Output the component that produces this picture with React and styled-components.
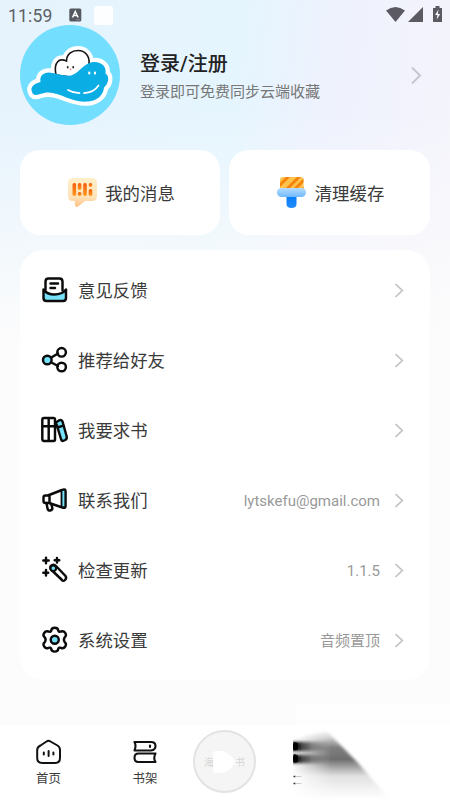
import styled, { createGlobalStyle } from "styled-components";

const GlobalStyle = createGlobalStyle`
    * {
        box-sizing: border-box;
    }
    body {
        margin: 0;
        background-color: #fcfcfc;
        color: #3a3a3a;
        font-family: Roboto, "Noto Sans CJK SC", sans-serif;
    }
    svg {
        display: block;
        flex-shrink: 0;
    }
`;

const Page = styled.div`
    width: 450px;
    height: 800px;
    display: flex;
    flex-direction: column;
    overflow: hidden;
    background:
        linear-gradient(180deg, rgba(252, 252, 252, 0) 110px, #fcfcfc 340px),
        linear-gradient(98deg, #e6f3fd 0%, #e5f5fe 44%, #eef2fd 60%, #f3f3fc 80%, #f8f7fc 100%);
`;

const StatusBar = styled.div`
    height: 25px;
    padding: 6px 8px 0;
    display: flex;
    align-items: flex-start;
    color: #5c6064;
`;

const Clock = styled.span`
    width: 61px;
    font-size: 17.5px;
    line-height: 20px;
    letter-spacing: 0.2px;
`;

const Blank = styled.div`
    width: 19px;
    height: 19px;
    margin-left: 12px;
    border-radius: 2px;
    background-color: #fdfeff;
`;

const StatusIcons = styled.div`
    margin-left: auto;
    margin-right: -1px;
`;

const Profile = styled.div`
    height: 100px;
    padding: 0 28px 0 20px;
    display: flex;
    align-items: center;
`;

const ProfileText = styled.div`
    flex: 1;
    padding: 3px 0 0 20px;
`;

const Title = styled.div`
    color: #222;
    font-size: 20px;
    line-height: 30px;
    font-weight: 500;
`;

const Subtitle = styled.div`
    margin-top: 1px;
    color: #777;
    font-size: 15px;
    line-height: 24px;
`;

const Tiles = styled.div`
    display: grid;
    grid-template-columns: 200px 201px;
    gap: 9px;
    padding: 25px 20px 15px;
`;

const Tile = styled.div`
    height: 85px;
    padding: 0 0 2px 2px;
    border-radius: 20px;
    display: flex;
    align-items: center;
    justify-content: center;
    gap: 8px;
    background-color: white;
`;

const TileLabel = styled.span`
    padding-top: 2px;
    font-size: 17.4px;
`;

const Menu = styled.div`
    height: 430px;
    margin: 0 20px;
    padding: 5px 26px 5px 21px;
    border-radius: 24px;
    background-color: white;
`;

const MenuRow = styled.div`
    height: 70px;
    display: flex;
    align-items: center;
`;

const MenuLabel = styled.span`
    margin-left: 9px;
    padding-bottom: 2px;
    flex: 1;
    font-size: 17.4px;
`;

const MenuValue = styled.span`
    margin-right: 14px;
    padding: ${(props) => (props.$latin ? "2px 0 0" : "0 0 2px")};
    color: #999;
    font-size: 15px;
`;

const TabBar = styled.div`
    height: 75px;
    margin-top: auto;
    display: grid;
    grid-template-columns: 97px 96px 63px 194px;
    background-color: white;
`;

const Tab = styled.div`
    display: flex;
    flex-direction: column;
    align-items: center;
    padding-top: 13px;
`;

const TabLabel = styled.span`
    margin-top: 4px;
    font-size: 12.4px;
    line-height: 18px;
`;

const Player = styled.div`
    width: 63px;
    height: 63px;
    margin-top: 5px;
    border: 2px solid #e3e3e3;
    border-radius: 50%;
    display: flex;
    align-items: center;
    justify-content: center;
    background-color: #f5f5f5;
    color: #d6d6d6;
    font-size: 10px;
    svg {
        margin: 0 -1px 0 -2px;
    }
`;

function Avatar() {
    const cloud =
        "M36 50C35 45 35 41 36.500 38.500C38.500 34.500 42.500 34 46.500 36C46.500 29 52 25.500 58 25.500C65 25.500 70 31 69 39L58 53Z";
    const water =
        "M12 67C10 62 14 58.500 20.500 57C19.500 51 23 47.500 29 47.500C37 48.500 44 51.500 51 50.500C59 48 63 39.500 71 37.500C80 35.500 87 41 85.500 48.500C90 51 88.500 59 84 62.500C83.500 70 77 76 68 76.500C57 77.500 48 73 40 70C32 67 27 66.500 20 69C15 71 13 70 12 67Z";
    return (
        <svg width="100" height="100" viewBox="0 0 100 100">
            <circle cx="50" cy="50" r="50" fill="#73defe" />
            <path d={cloud} fill="white" stroke="white" strokeWidth="9" strokeLinejoin="round" />
            <path d={water} fill="white" stroke="white" strokeWidth="8.500" strokeLinejoin="round" />
            <path d={cloud} fill="white" stroke="#161616" strokeWidth="1.600" />
            <path d={water} fill="#0badE5" />
            <g fill="none" stroke="white" strokeLinecap="round">
                <path d="M48 65Q53 68 59.500 68.200M64 68.200Q74 67.500 78.500 60.500" strokeWidth="1.700" />
                <path d="M69.300 47.500v1M75 47.500v1" strokeWidth="2.200" />
            </g>
            <path d="M47.700 41.800v.8M53.200 41.800v.8" stroke="#222" strokeWidth="1.700" strokeLinecap="round" />
            <circle cx="50.500" cy="44.300" r=".9" fill="#f08a8a" />
        </svg>
    );
}

const Chevron = ({ large }) => (
    <svg width={large ? 12 : 10} height={large ? 19 : 15} viewBox={large ? "0 0 12 19" : "0 0 10 15"} fill="none">
        <path
            d={large ? "M2 1.5L10 9.5L2 17.500" : "M1.500 1L8.300 7.500L1.500 14"}
            stroke={large ? "#c5c7ce" : "#c1c1c1"}
            strokeWidth={large ? 2 : 1.700}
        />
    </svg>
);

const InputModeIcon = styled.svg`
    margin-top: 2px;
`;

function InputMode() {
    return (
        <InputModeIcon width="13" height="14" viewBox="0 0 13 14">
            <rect x=".3" y=".5" width="12" height="13" rx="1.500" fill="#555a60" />
            <path d="M3.500 9.500L6.300 3.500L9.100 9.500M4.600 7.500H8" fill="none" stroke="white" strokeWidth="1.500" />
            <path d="M7 11.700h4" stroke="#a7aaaf" strokeWidth=".6" />
        </InputModeIcon>
    );
}

function SystemIcons() {
    return (
        <svg width="57" height="17" viewBox="0 0 57 17" fill="#5b5a62">
            <path d="M0 4.500Q9.500-2.500 19 4.500L9.500 16Z" />
            <path d="M37 1V16H22Z" />
            <path d="M47 2h2.500V0h4v2H56v14H47Z" />
            <path d="M52.500 3.500L49 9h2.300l-.6 4.500L54.200 8h-2.300Z" fill="#f4f3fb" />
        </svg>
    );
}

function MessageIcon() {
    return (
        <svg width="30" height="30" viewBox="0 0 30 30">
            <defs>
                <linearGradient id="bubble" x1="0" y1="0" x2="0" y2="1">
                    <stop offset="0" stopColor="#ffefc9" />
                    <stop offset=".65" stopColor="#ffe3b9" />
                    <stop offset="1" stopColor="#ffc184" />
                </linearGradient>
                <linearGradient id="bars" x1="0" y1="0" x2="0" y2="1">
                    <stop offset="0" stopColor="#f15a0c" />
                    <stop offset="1" stopColor="#ff9a22" />
                </linearGradient>
            </defs>
            <path d="M6 1H25Q30 1 30 6V19Q30 24 25 24H18L11 29.500Q8.500 31 8 28L7.500 24H6Q1 24 1 19V6Q1 1 6 1Z" fill="url(#bubble)" />
            <g fill="url(#bars)">
                <rect x="5.500" y="6" width="3.600" height="13" rx="1.700" />
                <rect x="10.800" y="6" width="3.600" height="7" rx="1.700" />
                <circle cx="12.600" cy="17" r="1.900" />
                <rect x="16.200" y="6" width="3.600" height="13" rx="1.700" />
                <circle cx="23.500" cy="8" r="1.900" />
                <rect x="21.700" y="12" width="3.600" height="7" rx="1.700" />
            </g>
        </svg>
    );
}

function BrushIcon() {
    return (
        <svg width="30" height="32" viewBox="0 0 30 32">
            <defs>
                <linearGradient id="band" x1="0" y1="0" x2="0" y2="1">
                    <stop offset="0" stopColor="#b4ddff" />
                    <stop offset="1" stopColor="#72bafc" />
                </linearGradient>
                <linearGradient id="handle" x1="0" y1="0" x2="0" y2="1">
                    <stop offset="0" stopColor="#077df7" />
                    <stop offset="1" stopColor="#248bff" />
                </linearGradient>
                <clipPath id="bristles">
                    <path d="M3 14V4Q3 1 6 1H23Q26.500 1 26.500 4V14Z" />
                </clipPath>
            </defs>
            <g clipPath="url(#bristles)">
                <path d="M3 0H27V14H3Z" fill="#ffc34d" />
                <path d="M-2 14L13-1M6 17L23 0M14 17L30 1M22 17L34 5" stroke="#f7840a" strokeWidth="3" />
            </g>
            <rect x="0" y="12" width="29" height="9" rx="4.500" fill="url(#band)" />
            <path d="M9.500 21H19.500V28Q19.500 32 14.500 32T9.500 28Z" fill="url(#handle)" />
        </svg>
    );
}

const CYAN = "#75e2fa";

const Icon = ({ children }) => (
    <svg
        width="28"
        height="28"
        viewBox="0 0 28 28"
        fill="none"
        stroke="#0b0b0b"
        strokeWidth="2.450"
        strokeLinecap="round"
        strokeLinejoin="round"
    >
        {children}
    </svg>
);

const FeedbackIcon = () => (
    <Icon>
        <path d="M4.500 14V5.500Q4.500 2.500 7.500 2.500H18.500Q21.500 2.500 21.500 5.500V14" />
        <path d="M2.500 13.500Q6 18.500 13.500 18.500T25 13.500V22Q25 25 22 25H5.500Q2.500 25 2.500 22Z" fill={CYAN} />
        <path d="M9.500 7.500H17M9.500 12H14" />
    </Icon>
);

const ShareIcon = () => (
    <Icon>
        <path d="M9.500 12L17 7.500M9.500 16L17 20" />
        <circle cx="6.300" cy="14" r="4.300" fill={CYAN} />
        <circle cx="20.600" cy="6.300" r="4.300" />
        <circle cx="20.600" cy="21" r="4.300" />
    </Icon>
);

const BooksIcon = () => (
    <Icon>
        <path d="M3 2H12.500Q14 2 14 3.500V23.500Q14 25 12.500 25H3Q1.300 25 1.300 23V4Q1.300 2 3 2ZM7.700 2V25M1.300 10.300H14" />
        <path d="M15 6.500L18.200 4.300Q20.500 3.200 21.500 5.500L25.700 20.500Q26.200 23 24.200 24L22 25Q20.500 25 20 23Z" fill={CYAN} />
        <path d="M16.500 11.500L22.200 9.700" />
    </Icon>
);

const MegaphoneIcon = () => (
    <Icon>
        <path d="M6.800 9.500L21 4Q24.500 2.500 24.500 5.500V20Q24.500 22.500 21.500 21.500L8 17H4.500Q2.500 17 2.500 15V11.500Q2.500 9.500 4.500 9.500Z" />
        <path d="M20.500 4.500V21L24.300 21.500V3.500Z" fill={CYAN} strokeWidth="1.800" />
        <path d="M8.500 9.500V16.500M5.500 17L6.500 22.500Q7 25 9.300 24.500T11.300 22L10.300 18" />
    </Icon>
);

const WandIcon = () => (
    <Icon>
        <path d="M9.800 10Q12.500 7.500 15.500 10.500L24.500 20Q26 22 24 24T20.500 23.500L10.500 14Q8.500 12 9.800 10Z" fill="white" />
        <circle cx="12.300" cy="12.300" r="2.800" fill={CYAN} strokeWidth="2" />
        <path d="M5 1.800V7.200M2.300 4.500H7.700M16 2V6.500M13.700 4.300H18.300M5 14V19.500M2.300 16.800H7.200" />
    </Icon>
);

const SettingsIcon = () => (
    <Icon>
        <path d="M10.300 4.500C10.500 .8 17 .8 17.200 4.500Q18 6.500 20 5.500C23.500 4 26.500 9 23.800 11.200Q22 13.700 23.800 16.200C26.500 18.500 23.500 23.500 20 21.900Q18 21 17.200 23C17 26.500 10.500 26.500 10.300 23Q9.500 21 7.500 21.900C4 23.500 .8 18.500 3.700 16.200Q5.500 13.700 3.700 11.200C.8 9 4 4 7.500 5.500Q9.500 6.500 10.300 4.500Z" />
        <circle cx="13.750" cy="13.700" r="4" fill={CYAN} />
    </Icon>
);

const HomeIcon = () => (
    <svg width="26" height="28" viewBox="0 0 26 28" fill="none" stroke="#111" strokeWidth="2" strokeLinecap="round">
        <path d="M4.500 7.500L10.500 3.500Q12.500 2 14.500 3.500L21.500 7.500Q24 9 24 12V20Q24 25 19 25H6.500Q1.200 25 1.200 20V12Q1.200 9 4.500 7.500Z" />
        <path d="M7.800 14.500V16.500M12.600 13V18M17.400 14.500V16.500" />
    </svg>
);

const ShelfIcon = () => (
    <svg width="24" height="28" viewBox="0 0 24 28" fill="none" stroke="#111" strokeWidth="2.100" strokeLinejoin="round">
        <path d="M1.500 4H18Q22.500 4 22.500 8T18 12.500H1.500Q3.500 8 1.500 4ZM22.500 15.500H5.500Q1.500 15.500 1.500 19.700T5.500 24H22.500Q20 20 22.500 15.500Z" />
        <path d="M17 7.500V9" strokeLinecap="round" />
    </svg>
);

const PlayIcon = () => (
    <svg width="24" height="24" viewBox="0 0 24 24">
        <path d="M4 1H11Q17 3 23 11Q24 12 23 13Q17 21 11 23H4Q1 23 1 20V4Q1 1 4 1Z" fill="white" />
    </svg>
);

const SmudgeArt = styled.svg`
    margin-top: -21px;
`;

// dark streaks that fade out towards a soft diagonal edge
function Smudge() {
    return (
        <SmudgeArt width="194" height="96" viewBox="0 -21 194 96">
            <defs>
                <linearGradient id="streak" gradientUnits="userSpaceOnUse" x1="37" y1="0" x2="76" y2="0">
                    <stop offset="0" stopColor="#000" />
                    <stop offset=".12" stopColor="#000" stopOpacity=".88" />
                    <stop offset=".5" stopColor="#222" stopOpacity=".42" />
                    <stop offset="1" stopColor="#444" stopOpacity="0" />
                </linearGradient>
                <linearGradient id="haze" gradientUnits="userSpaceOnUse" x1="0" y1="5" x2="0" y2="75">
                    <stop offset="0" stopColor="#555" stopOpacity="0" />
                    <stop offset=".12" stopColor="#555" stopOpacity=".32" />
                    <stop offset=".25" stopColor="#555" stopOpacity=".75" />
                    <stop offset=".42" stopColor="#555" stopOpacity=".85" />
                    <stop offset=".54" stopColor="#555" stopOpacity=".5" />
                    <stop offset=".66" stopColor="#666" stopOpacity=".2" />
                    <stop offset="1" stopColor="#888" stopOpacity="0" />
                </linearGradient>
                <linearGradient id="fadeIn" gradientUnits="userSpaceOnUse" x1="37" y1="0" x2="76" y2="0">
                    <stop offset="0" stopColor="white" stopOpacity=".04" />
                    <stop offset=".35" stopColor="white" stopOpacity=".4" />
                    <stop offset="1" stopColor="white" />
                </linearGradient>
                <filter id="soft" x="-20%" y="-20%" width="140%" height="140%">
                    <feGaussianBlur stdDeviation="1.600" />
                </filter>
                <mask id="wedge" maskUnits="userSpaceOnUse" x="30" y="-5" width="120" height="85">
                    <path d="M37 14L70 5L102 38L134 75H37Z" fill="url(#fadeIn)" filter="url(#soft)" />
                </mask>
                <clipPath id="start">
                    <path d="M37 0H140V75H37Z" />
                </clipPath>
            </defs>
            <rect x="40" y="-21" width="154" height="22" fill="white" opacity=".5" />
            <path d="M37 0H140V75H37Z" fill="url(#haze)" mask="url(#wedge)" />
            <g clipPath="url(#start)">
                <path d="M34 17H76V26H34ZM34 30H76V38H34Z" fill="url(#streak)" filter="url(#soft)" />
            </g>
            <path d="M38.500 17Q37 18 37 21T38.500 25.500L42 24.500V18ZM38.500 29Q37 30 37 33T38.500 38L42 37V30.500Z" fill="url(#streak)" />
            <path d="M37.500 51.500h2M37.500 58.500h2" stroke="#333" strokeWidth="1.400" />
            <path d="M39.500 51.500h6M39.500 58.500h6" stroke="#ccc" strokeWidth="1.200" />
        </SmudgeArt>
    );
}

const items = [
    { label: "意见反馈", icon: FeedbackIcon },
    { label: "推荐给好友", icon: ShareIcon },
    { label: "我要求书", icon: BooksIcon },
    { label: "联系我们", icon: MegaphoneIcon, value: "lytskefu@gmail.com", latin: true },
    { label: "检查更新", icon: WandIcon, value: "1.1.5", latin: true },
    { label: "系统设置", icon: SettingsIcon, value: "音频置顶" },
];

function App() {
    return (
        <>
            <GlobalStyle />
            <Page>
                <StatusBar>
                    <Clock>11:59</Clock>
                    <InputMode />
                    <Blank />
                    <StatusIcons>
                        <SystemIcons />
                    </StatusIcons>
                </StatusBar>
                <Profile>
                    <Avatar />
                    <ProfileText>
                        <Title>登录/注册</Title>
                        <Subtitle>登录即可免费同步云端收藏</Subtitle>
                    </ProfileText>
                    <Chevron large />
                </Profile>
                <Tiles>
                    <Tile>
                        <MessageIcon />
                        <TileLabel>我的消息</TileLabel>
                    </Tile>
                    <Tile>
                        <BrushIcon />
                        <TileLabel>清理缓存</TileLabel>
                    </Tile>
                </Tiles>
                <Menu>
                    {items.map(({ label, icon: ItemIcon, value, latin }) => (
                        <MenuRow key={label}>
                            <ItemIcon />
                            <MenuLabel>{label}</MenuLabel>
                            {value && <MenuValue $latin={latin}>{value}</MenuValue>}
                            <Chevron />
                        </MenuRow>
                    ))}
                </Menu>
                <TabBar>
                    <Tab>
                        <HomeIcon />
                        <TabLabel>首页</TabLabel>
                    </Tab>
                    <Tab>
                        <ShelfIcon />
                        <TabLabel>书架</TabLabel>
                    </Tab>
                    <Player>
                        <span>海</span>
                        <PlayIcon />
                        <span>书</span>
                    </Player>
                    <Smudge />
                </TabBar>
            </Page>
        </>
    );
}

export default App;
